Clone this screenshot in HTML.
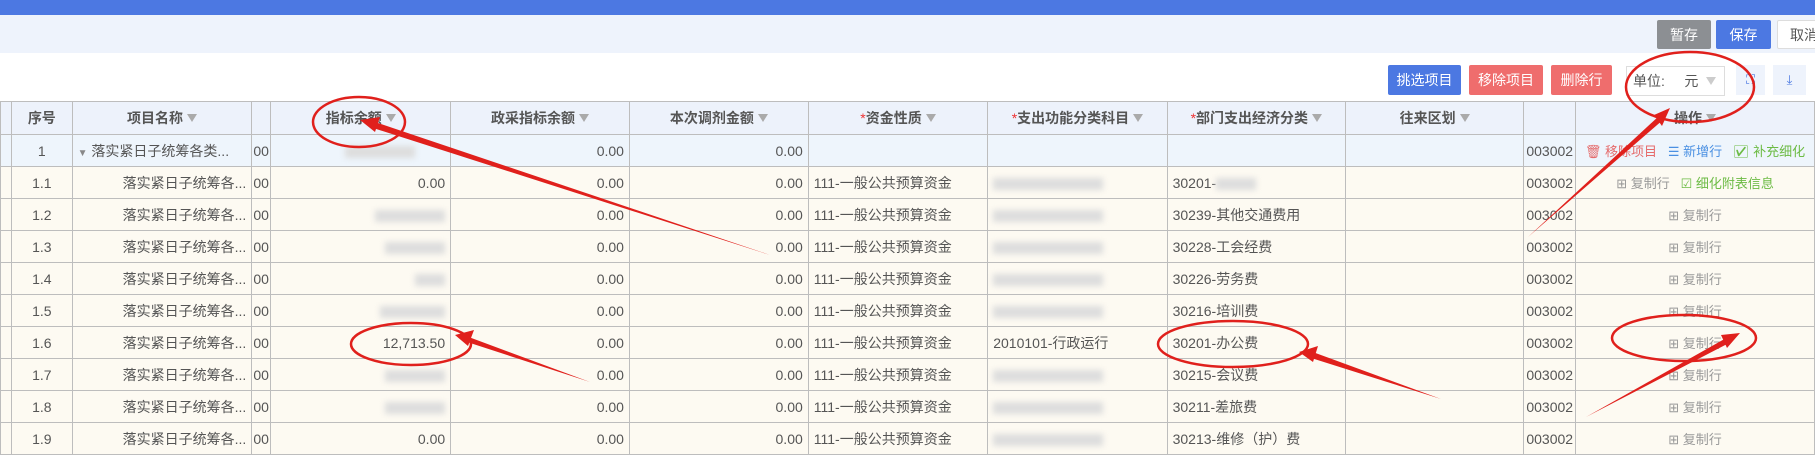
<!DOCTYPE html>
<html><head><meta charset="utf-8">
<style>
*{margin:0;padding:0;box-sizing:border-box}
body{width:1815px;height:455px;overflow:hidden;background:#fff;font-family:"Liberation Sans","Noto Sans CJK SC",sans-serif;font-size:14px;color:#555;position:relative}
.top{position:absolute;left:0;top:0;width:1815px;height:15px;background:#4c78e2}
.band{position:absolute;left:0;top:15px;width:1815px;height:38px;background:#eef3fc}
.btn{position:absolute;color:#fff;font-size:14px;display:flex;align-items:center;justify-content:center;border-radius:2px;white-space:nowrap}
table{position:absolute;left:0;top:101px;border-collapse:collapse;table-layout:fixed}
td,th{border:1px solid #bdbdbd;height:32px;white-space:nowrap;overflow:hidden;padding:0 5px;font-weight:normal;text-align:left}
th{background:#edf2fb;font-weight:bold;height:33px;color:#555;text-align:center}
tr.p td{background:#eef5fc}
tr.ch td{background:#fdfaf2}
td.r{text-align:right}td.c{text-align:center}
.f{display:inline-block;width:0;height:0;border-left:5px solid transparent;border-right:5px solid transparent;border-top:8px solid #aaa;margin-left:4px;vertical-align:1px}
.s{color:#e33;font-weight:normal}
.bl{display:inline-block;height:12px;background:#ddd;filter:blur(3px);vertical-align:middle}
.g{color:#999}.gr{color:#6cbb44}.rd{color:#e56b6b}.bu{color:#4a90e2}
</style></head><body>
<div class="top"></div><div class="band"></div>
<div class="btn" style="left:1657px;top:20px;width:54px;height:29px;background:#8c8f93">暂存</div>
<div class="btn" style="left:1716px;top:20px;width:55px;height:29px;background:#4c78e2">保存</div>
<div class="btn" style="left:1777px;top:20px;width:45px;height:29px;background:#fff;border:1px solid #ddd;color:#555;justify-content:flex-start;padding-left:12px">取消</div>
<div class="btn" style="left:1388px;top:65px;width:73px;height:30px;background:#4c78e2">挑选项目</div>
<div class="btn" style="left:1469px;top:65px;width:74px;height:30px;background:#ef6d6d">移除项目</div>
<div class="btn" style="left:1551px;top:65px;width:61px;height:30px;background:#ef6d6d">删除行</div>
<div style="position:absolute;left:1626px;top:66px;width:99px;height:30px;border:1px solid #ddd;font-size:14px;color:#555;line-height:28px;padding-left:6px;white-space:nowrap">单位:&nbsp;&nbsp;&nbsp;&nbsp;&nbsp;元 <span class="f" style="border-top-color:#ccc"></span></div>
<div style="position:absolute;left:1736px;top:65px;width:29px;height:30px;background:#eef3fc;color:#4a78e2;text-align:center;line-height:30px;font-size:13px">⛶</div>
<div style="position:absolute;left:1773px;top:65px;width:33px;height:30px;background:#eef3fc;color:#4a78e2;text-align:center;line-height:30px;font-size:13px">⤓</div>
<table>
<colgroup><col style="width:6px"><col style="width:61px"><col style="width:180px"><col style="width:19px"><col style="width:181px"><col style="width:180px"><col style="width:180px"><col style="width:180px"><col style="width:180px"><col style="width:179px"><col style="width:180px"><col style="width:47px"><col style="width:239px"></colgroup>
<tr><th></th><th>序号</th><th>项目名称<span class="f"></span></th><th></th><th>指标余额<span class="f"></span></th><th>政采指标余额<span class="f"></span></th><th>本次调剂金额<span class="f"></span></th><th><span class="s">*</span>资金性质<span class="f"></span></th><th><span class="s">*</span>支出功能分类科目<span class="f"></span></th><th><span class="s">*</span>部门支出经济分类<span class="f"></span></th><th>往来区划<span class="f"></span></th><th></th><th>操作<span class="f"></span></th></tr>
<tr class="p"><td></td><td class="c">1</td><td><span style="color:#888;font-size:10px">▼</span> 落实紧日子统筹各类...</td><td style="padding:0 1px">00</td><td class="r"><span class="bl" style="width:70px;margin-right:30px"></span></td><td class="r">0.00</td><td class="r">0.00</td><td></td><td></td><td></td><td></td><td style="padding:0 2px">003002</td><td class="c" style="font-size:13px"><span class="rd">🗑 移除项目</span>&nbsp;&nbsp; <span class="bu">☰ 新增行</span>&nbsp;&nbsp; <span class="gr">☑ 补充细化</span></td></tr>
<tr class="ch"><td></td><td class="c">1.1</td><td class="r">落实紧日子统筹各...</td><td style="padding:0 1px">00</td><td class="r">0.00</td><td class="r">0.00</td><td class="r">0.00</td><td>111-一般公共预算资金</td><td><span class="bl" style="width:110px"></span></td><td>30201-<span class="bl" style="width:40px"></span></td><td></td><td style="padding:0 2px">003002</td><td class="c" style="font-size:13px"><span class="g">⊞ 复制行</span>&nbsp;&nbsp; <span class="gr">☑ 细化附表信息</span></td></tr>
<tr class="ch"><td></td><td class="c">1.2</td><td class="r">落实紧日子统筹各...</td><td style="padding:0 1px">00</td><td class="r"><span class="bl" style="width:70px"></span></td><td class="r">0.00</td><td class="r">0.00</td><td>111-一般公共预算资金</td><td><span class="bl" style="width:110px"></span></td><td>30239-其他交通费用</td><td></td><td style="padding:0 2px">003002</td><td class="c g" style="font-size:13px">⊞ 复制行</td></tr>
<tr class="ch"><td></td><td class="c">1.3</td><td class="r">落实紧日子统筹各...</td><td style="padding:0 1px">00</td><td class="r"><span class="bl" style="width:60px"></span></td><td class="r">0.00</td><td class="r">0.00</td><td>111-一般公共预算资金</td><td><span class="bl" style="width:110px"></span></td><td>30228-工会经费</td><td></td><td style="padding:0 2px">003002</td><td class="c g" style="font-size:13px">⊞ 复制行</td></tr>
<tr class="ch"><td></td><td class="c">1.4</td><td class="r">落实紧日子统筹各...</td><td style="padding:0 1px">00</td><td class="r"><span class="bl" style="width:30px"></span></td><td class="r">0.00</td><td class="r">0.00</td><td>111-一般公共预算资金</td><td><span class="bl" style="width:110px"></span></td><td>30226-劳务费</td><td></td><td style="padding:0 2px">003002</td><td class="c g" style="font-size:13px">⊞ 复制行</td></tr>
<tr class="ch"><td></td><td class="c">1.5</td><td class="r">落实紧日子统筹各...</td><td style="padding:0 1px">00</td><td class="r"><span class="bl" style="width:65px"></span></td><td class="r">0.00</td><td class="r">0.00</td><td>111-一般公共预算资金</td><td><span class="bl" style="width:110px"></span></td><td>30216-培训费</td><td></td><td style="padding:0 2px">003002</td><td class="c g" style="font-size:13px">⊞ 复制行</td></tr>
<tr class="ch"><td></td><td class="c">1.6</td><td class="r">落实紧日子统筹各...</td><td style="padding:0 1px">00</td><td class="r">12,713.50</td><td class="r">0.00</td><td class="r">0.00</td><td>111-一般公共预算资金</td><td>2010101-行政运行</td><td>30201-办公费</td><td></td><td style="padding:0 2px">003002</td><td class="c g" style="font-size:13px">⊞ 复制行</td></tr>
<tr class="ch"><td></td><td class="c">1.7</td><td class="r">落实紧日子统筹各...</td><td style="padding:0 1px">00</td><td class="r"><span class="bl" style="width:60px"></span></td><td class="r">0.00</td><td class="r">0.00</td><td>111-一般公共预算资金</td><td><span class="bl" style="width:110px"></span></td><td>30215-会议费</td><td></td><td style="padding:0 2px">003002</td><td class="c g" style="font-size:13px">⊞ 复制行</td></tr>
<tr class="ch"><td></td><td class="c">1.8</td><td class="r">落实紧日子统筹各...</td><td style="padding:0 1px">00</td><td class="r"><span class="bl" style="width:60px"></span></td><td class="r">0.00</td><td class="r">0.00</td><td>111-一般公共预算资金</td><td><span class="bl" style="width:110px"></span></td><td>30211-差旅费</td><td></td><td style="padding:0 2px">003002</td><td class="c g" style="font-size:13px">⊞ 复制行</td></tr>
<tr class="ch"><td></td><td class="c">1.9</td><td class="r">落实紧日子统筹各...</td><td style="padding:0 1px">00</td><td class="r">0.00</td><td class="r">0.00</td><td class="r">0.00</td><td>111-一般公共预算资金</td><td><span class="bl" style="width:110px"></span></td><td>30213-维修（护）费</td><td></td><td style="padding:0 2px">003002</td><td class="c g" style="font-size:13px">⊞ 复制行</td></tr>
</table>
<svg style="position:absolute;left:0;top:0" width="1815" height="455">
<g fill="none" stroke="#e0201c" stroke-width="2.5">
<ellipse cx="359" cy="122" rx="46" ry="25"/>
<ellipse cx="411" cy="344" rx="60" ry="21"/>
<ellipse cx="1233" cy="344" rx="75" ry="23"/>
<ellipse cx="1684" cy="338" rx="72" ry="23"/>
<ellipse cx="1690" cy="87" rx="64" ry="35"/>
</g>
<g fill="#e0201c">
<polygon points="770,255 372,121 370,127"/><polygon points="360,120 380,117 375,132"/>
<polygon points="590,382 466,336 464,341"/><polygon points="455,335 474,330 468,346"/>
<polygon points="1441,399 1310,351 1308,357"/><polygon points="1299,352 1318,346 1313,362"/>
<polygon points="1586,417 1728,337 1731,342"/><polygon points="1740,333 1727,348 1721,335"/>
<polygon points="1528,237 1660,115 1664,119"/><polygon points="1670,108 1662,126 1654,115"/>
</g>
</svg>
</body></html>
